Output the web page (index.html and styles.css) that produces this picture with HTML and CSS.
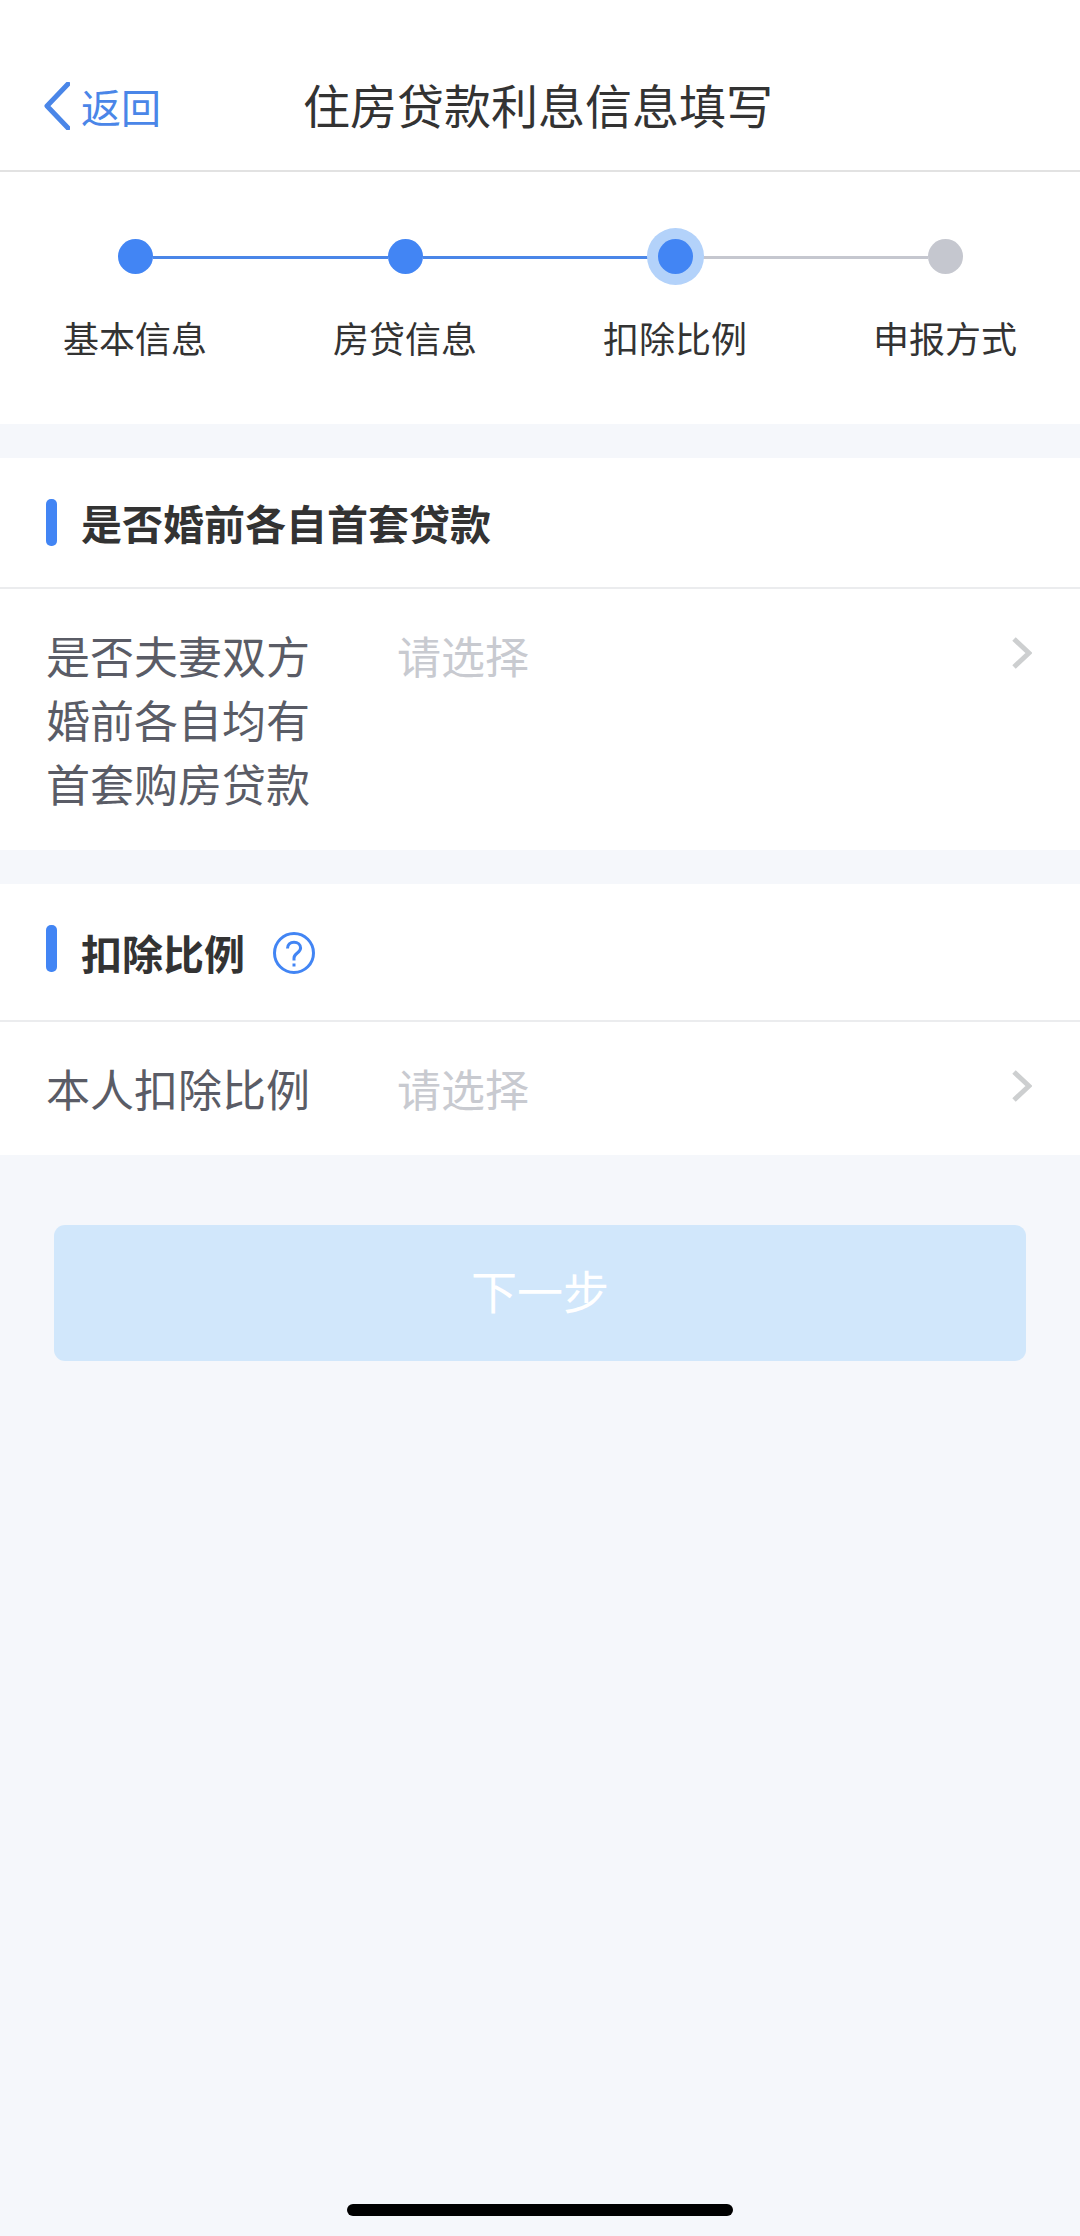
FILE: index.html
```html
<!DOCTYPE html>
<html lang="zh-CN">
<head>
    <meta charset="UTF-8">
    <meta name="viewport" content="width=device-width, initial-scale=1.0">
    <title>住房贷款利息信息填写</title>
    <link rel="stylesheet" href="styles.css">
</head>
<body>
    <header class="navbar">
        <a class="back" href="#">
            <svg class="back-icon" viewBox="0 0 26 48" aria-hidden="true">
                <path d="M24 2 L3 24 L24 46"/>
            </svg>
            返回
        </a>
        <h1>住房贷款利息信息填写</h1>
    </header>

    <ol class="steps">
        <li class="step done">
            <div class="marker"><span class="dot"></span></div>
            基本信息
        </li>
        <li class="step done">
            <div class="marker"><span class="dot"></span></div>
            房贷信息
        </li>
        <li class="step current" aria-current="step">
            <div class="marker"><span class="dot"></span></div>
            扣除比例
        </li>
        <li class="step">
            <div class="marker"><span class="dot"></span></div>
            申报方式
        </li>
    </ol>

    <form class="form">
        <section class="card">
            <div class="card-title">
                <h2>是否婚前各自首套贷款</h2>
            </div>
            <div class="row">
                <label for="first-loan">是否夫妻双方婚前各自均有首套购房贷款</label>
                <select id="first-loan">
                    <option value="">请选择</option>
                    <option value="1">是</option>
                    <option value="0">否</option>
                </select>
                <svg class="arrow" viewBox="0 0 20 32" aria-hidden="true">
                    <path d="M2 2 L17 16 L2 30"/>
                </svg>
            </div>
        </section>

        <section class="card">
            <div class="card-title">
                <h2>扣除比例</h2>
                <button type="button" class="help" aria-label="扣除比例说明">
                    <svg viewBox="0 0 42 42" aria-hidden="true">
                        <circle cx="21" cy="21" r="19.5"/>
                        <path d="M14.5 16.5 C14.5 12.5 17.2 10.2 21 10.2 C24.8 10.2 27.6 12.6 27.6 16 C27.6 20.8 21 21.2 21 26 V28.5"/>
                        <path d="M21 31.5 V34.5"/>
                    </svg>
                </button>
            </div>
            <div class="row">
                <label for="ratio">本人扣除比例</label>
                <select id="ratio">
                    <option value="">请选择</option>
                    <option value="100">100%</option>
                    <option value="50">50%</option>
                </select>
                <svg class="arrow" viewBox="0 0 20 32" aria-hidden="true">
                    <path d="M2 2 L17 16 L2 30"/>
                </svg>
            </div>
        </section>

        <button type="submit" class="next" disabled>下一步</button>
    </form>

    <div class="home-bar"></div>
</body>
</html>
```
FILE: styles.css
```css
* {
    box-sizing: border-box;
}
body {
    margin: 0;
    min-height: 100vh;
    display: flex;
    flex-direction: column;
    background: #f5f7fb;
    color: #333;
    font-family: "Noto Sans CJK SC", sans-serif;
}
h1, h2 {
    margin: 0;
}
svg {
    display: block;
    fill: none;
}

/* 顶部导航 */
.navbar {
    display: grid;
    grid-template-columns: 1fr auto 1fr;
    align-items: center;
    padding: 42px 48px 0 44px;
    height: 172px;
    background: #fff;
    border-bottom: 2px solid #e2e2e2;
}
.navbar h1 {
    padding-bottom: 4px;
    font-size: 47px;
    font-weight: 400;
    line-height: 64px;
}
.back {
    display: flex;
    align-items: center;
    gap: 11px;
    color: #4a86e8;
    font-size: 40px;
    line-height: 64px;
    text-decoration: none;
}
.back-icon {
    width: 26px;
    height: 48px;
    stroke: #4a86e8;
    stroke-width: 5;
    stroke-linecap: round;
    stroke-linejoin: round;
}

/* 步骤条 */
.steps {
    display: grid;
    grid-template-columns: repeat(4, 1fr);
    margin: 0;
    padding: 67px 0 62px;
    list-style: none;
    background: #fff;
}
.step {
    font-size: 36px;
    line-height: 50px;
    text-align: center;
}
.marker {
    display: flex;
    align-items: center;
    margin-bottom: 38px;
}
.marker::before,
.marker::after {
    content: "";
    flex: 1;
    height: 3px;
    margin-top: 2px;
    background: #c5c7cf;
}
.done .marker::before,
.done .marker::after,
.current .marker::before {
    background: #4a86e8;
}
.step:first-child .marker::before,
.step:last-child .marker::after {
    background: none;
}
.dot {
    position: relative;
    z-index: 1;
    width: 35px;
    height: 35px;
    border-radius: 50%;
    background: #c5c7cf;
}
.done .dot,
.current .dot {
    background: #4285f4;
}
.current .dot {
    box-shadow: 0 0 0 11px #b3d2fa;
}

/* 表单 */
.card {
    margin-top: 34px;
    background: #fff;
}
.card-title {
    display: flex;
    align-items: center;
    padding: 41px 46px 40px;
    border-bottom: 2px solid #ebecee;
}
.card-title::before {
    content: "";
    align-self: flex-start;
    width: 11px;
    height: 47px;
    margin-right: 24px;
    border-radius: 5px;
    background: #4285f4;
}
.card-title h2 {
    padding-bottom: 2px;
    font-size: 41px;
    font-weight: 700;
    line-height: 46px;
}
.help {
    height: 55px;
    margin-left: 28px;
    padding: 0;
    border: none;
    background: none;
}
.help svg {
    width: 42px;
    height: 42px;
    stroke: #4285f4;
    stroke-width: 3;
}
.row {
    display: flex;
    align-items: flex-start;
    padding: 34px 48px 35px 46px;
    font-size: 44px;
    line-height: 64px;
}
.row label {
    flex: 0 0 351px;
    padding-right: 86px;
    color: #5a5c66;
}
.row select {
    flex: 1;
    height: 64px;
    padding: 0;
    border: none;
    appearance: none;
    background: none;
    color: #c8cad0;
    font: inherit;
}
.arrow {
    width: 20px;
    height: 32px;
    margin-top: 14px;
    stroke: #cdcfd0;
    stroke-width: 5;
}
.next {
    display: block;
    width: 90%;
    height: 136px;
    margin: 70px auto 0;
    padding: 0 0 8px;
    border: none;
    border-radius: 11px;
    background: #d1e7fb;
    color: #fff;
    font-family: inherit;
    font-size: 46px;
}

.home-bar {
    width: 386px;
    height: 12px;
    margin: auto auto 20px;
    border-radius: 6px;
    background: #000;
}
```
